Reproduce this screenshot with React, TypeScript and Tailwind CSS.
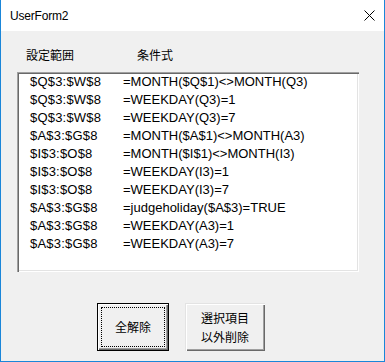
import React from "react";

const rows: [string, string][] = [
  ["$Q$3:$W$8", "=MONTH($Q$1)<>MONTH(Q3)"],
  ["$Q$3:$W$8", "=WEEKDAY(Q3)=1"],
  ["$Q$3:$W$8", "=WEEKDAY(Q3)=7"],
  ["$A$3:$G$8", "=MONTH($A$1)<>MONTH(A3)"],
  ["$I$3:$O$8", "=MONTH($I$1)<>MONTH(I3)"],
  ["$I$3:$O$8", "=WEEKDAY(I3)=1"],
  ["$I$3:$O$8", "=WEEKDAY(I3)=7"],
  ["$A$3:$G$8", "=judgeholiday($A$3)=TRUE"],
  ["$A$3:$G$8", "=WEEKDAY(A3)=1"],
  ["$A$3:$G$8", "=WEEKDAY(A3)=7"],
];

export default function App() {
  return (
    <div className="w-[385px] h-[362px] flex flex-col border-l border-r border-b border-[#1a86d9] bg-white font-['Liberation_Sans','Noto_Sans_CJK_JP',sans-serif] text-black">
      <div className="h-[31px] shrink-0 flex items-center justify-between pl-[9px] pr-[9px] bg-white">
        <span className="text-[12px] tracking-[-0.2px] pt-[1px]">UserForm2</span>
        <svg width="11" height="11" viewBox="0 0 11 11">
          <path d="M0.5 0.5 L10.5 10.5 M10.5 0.5 L0.5 10.5" stroke="#000" strokeWidth="1" fill="none" />
        </svg>
      </div>
      <div className="flex-1 bg-[#f0f0f0] flex flex-col">
        <div className="mt-[15px] h-[18px] flex pl-[25px] text-[12px] leading-[18px] font-['Noto_Sans_CJK_JP',sans-serif]">
          <span className="w-[111px]">設定範囲</span>
          <span>条件式</span>
        </div>
        <div className="mt-[8px] ml-[16px] w-[342px] h-[200px] bg-white pt-[1px] pl-[13px] shadow-[inset_1px_1px_0_#a0a0a0,inset_2px_2px_0_#696969,inset_-1px_-1px_0_#ffffff,inset_-2px_-2px_0_#e3e3e3] text-[13px] leading-[18px]">
          {rows.map(([a, b], i) => (
            <div key={i} className="flex h-[18px] whitespace-nowrap">
              <span className="w-[93px] tracking-[0.2px]">{a}</span>
              <span>{b}</span>
            </div>
          ))}
        </div>
        <div className="mt-[31px] flex pl-[96px] gap-[16px] font-['Noto_Sans_CJK_JP',sans-serif] text-[12px]">
          <div className="w-[72px] h-[48px] border border-black bg-[#f0f0f0] shadow-[inset_1px_1px_0_#ffffff,inset_-1px_-1px_0_#696969,inset_-2px_-2px_0_#a0a0a0] p-[3px]">
            <div className="w-full h-full border border-dotted border-black flex items-center justify-center">
              全解除
            </div>
          </div>
          <div className="w-[80px] h-[48px] bg-[#f0f0f0] shadow-[inset_1px_1px_0_#e3e3e3,inset_2px_2px_0_#ffffff,inset_-1px_-1px_0_#696969,inset_-2px_-2px_0_#a0a0a0] flex flex-col items-center justify-center leading-[19px]">
            <span>選択項目</span>
            <span>以外削除</span>
          </div>
        </div>
      </div>
    </div>
  );
}
